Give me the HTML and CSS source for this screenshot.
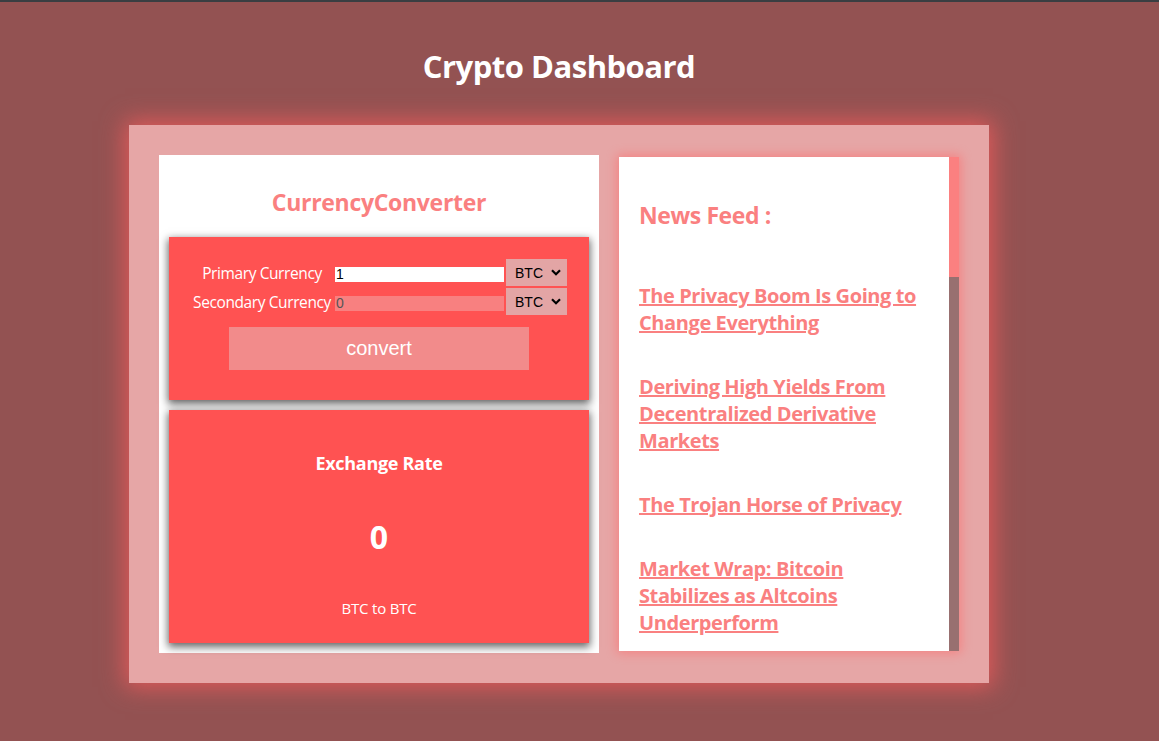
FILE: index.html
```html
<!DOCTYPE html>
<html lang="en">
<head>
<meta charset="utf-8">
<title>Crypto Dashboard</title>
<link rel="stylesheet" href="styles.css">
</head>
<body>
<div class="page">
  <h1 class="page-title">Crypto Dashboard</h1>
  <main class="dashboard">
    <section class="converter-card">
      <h2 class="converter-title">CurrencyConverter</h2>
      <div class="red-box form-box">
        <div class="form-grid">
          <label class="form-label" for="primary">Primary Currency</label>
          <input class="amount-input primary" id="primary" type="number" value="1">
          <select class="currency-select"><option>BTC</option><option>ETH</option><option>USD</option></select>
          <label class="form-label" for="secondary">Secondary Currency</label>
          <input class="amount-input secondary" id="secondary" type="number" value="0" disabled>
          <select class="currency-select"><option>BTC</option><option>ETH</option><option>USD</option></select>
        </div>
        <button class="convert-btn" type="button">convert</button>
      </div>
      <div class="red-box rate-box">
        <h3 class="rate-title">Exchange Rate</h3>
        <h1 class="rate-value">0</h1>
        <p class="rate-pair">BTC to BTC</p>
      </div>
    </section>
    <section class="news-card">
      <div class="news-content">
        <h2 class="news-title">News Feed :</h2>
        <ul class="news-list">
          <li><a href="#">The Privacy Boom Is Going to Change Everything</a></li>
          <li><a href="#">Deriving High Yields From Decentralized Derivative Markets</a></li>
          <li><a href="#">The Trojan Horse of Privacy</a></li>
          <li><a href="#">Market Wrap: Bitcoin Stabilizes as Altcoins Underperform</a></li>
        </ul>
      </div>
      <div class="scrollbar" aria-hidden="true"><div class="scrollbar-thumb"></div></div>
    </section>
  </main>
</div>
</body>
</html>
```

FILE: styles.css
```css
* { box-sizing: border-box; }

html, body {
  margin: 0;
  padding: 0;
}

body {
  background: #935252;
  border-top: 2px solid #3a3e42;
  min-height: 741px;
  font-family: "Open Sans", "Noto Sans", sans-serif;
  color: #fff;
  overflow: hidden;
}

.page {
  width: 1118px;
}

.page-title {
  margin: 0;
  padding-top: 44px;
  height: 123px;
  text-align: center;
  font-size: 31px;
  font-weight: 700;
  line-height: 40px;
  letter-spacing: -0.5px;
  color: #fff;
}

.dashboard {
  width: 860px;
  height: 558px;
  margin: 0 auto;
  padding: 30px;
  background: #e6a6a6;
  box-shadow: 0 0 22px 4px #e15a5a;
  display: flex;
  gap: 20px;
  align-items: flex-start;
}

.converter-card {
  width: 440px;
  height: 498px;
  background: #fff;
  padding: 0 10px 10px;
  display: flex;
  flex-direction: column;
}

.converter-title {
  margin: 0;
  height: 82px;
  padding-top: 32px;
  text-align: center;
  font-size: 23px;
  line-height: 30px;
  font-weight: 700;
  letter-spacing: -0.3px;
  color: #fa8080;
}

.red-box {
  background: #ff5252;
  box-shadow: 0 3px 8px 1px rgba(0, 0, 0, 0.6);
}

.form-box {
  height: 163px;
  padding-top: 22px;
  display: flex;
  flex-direction: column;
  align-items: center;
}

.form-grid {
  display: grid;
  grid-template-columns: 142px 169px 61px;
  column-gap: 2px;
  row-gap: 2px;
  align-items: center;
}

.form-label {
  text-align: center;
  font-size: 15.5px;
  line-height: 20px;
  color: #fff;
  white-space: nowrap;
  letter-spacing: -0.4px;
}

.amount-input {
  width: 169px;
  height: 15px;
  border: 0;
  padding: 0 1px;
  margin: 0;
  font-family: "Liberation Sans", Arial, sans-serif;
  font-size: 14px;
  line-height: 15px;
  outline: none;
  -moz-appearance: textfield;
}

.amount-input::-webkit-outer-spin-button,
.amount-input::-webkit-inner-spin-button {
  -webkit-appearance: none;
  margin: 0;
}

.amount-input.primary {
  background: #fff;
  color: #000;
  margin-top: 3px;
}

.amount-input.secondary {
  background: #f88080;
  color: #555;
  margin-top: 3px;
}

.currency-select {
  -webkit-appearance: none;
  appearance: none;
  width: 61px;
  height: 27px;
  border: 0;
  margin: 0;
  padding: 0 0 0 9px;
  background-color: #e3a5a5;
  background-image: url("data:image/svg+xml;utf8,<svg xmlns='http://www.w3.org/2000/svg' width='10' height='7' viewBox='0 0 10 7'><path d='M1 1.2 L5 5.2 L9 1.2' fill='none' stroke='black' stroke-width='2.2'/></svg>");
  background-repeat: no-repeat;
  background-position: right 6px center;
  font-family: "Liberation Sans", Arial, sans-serif;
  font-size: 14px;
  color: #000;
  outline: none;
}

.convert-btn {
  margin-top: 12px;
  width: 300px;
  height: 43px;
  border: 0;
  background: #f28b8b;
  color: #fff;
  font-family: "Liberation Sans", Arial, sans-serif;
  font-size: 20px;
  cursor: pointer;
}

.rate-box {
  margin-top: 10px;
  height: 233px;
  display: flex;
  flex-direction: column;
  align-items: center;
  padding-top: 40px;
}

.rate-title {
  margin: 0;
  font-size: 18px;
  line-height: 26px;
  font-weight: 700;
  letter-spacing: -0.3px;
}

.rate-value {
  margin: 41px 0 0;
  font-size: 32px;
  line-height: 40px;
  font-weight: 700;
}

.rate-pair {
  margin: 41px 0 0;
  font-size: 15px;
  line-height: 20px;
  letter-spacing: -0.2px;
}

.news-card {
  margin-top: 2px;
  width: 340px;
  height: 494px;
  background: #fff;
  box-shadow: 0 0 10px 2px #f48383;
  display: flex;
}

.news-content {
  flex: 1;
  padding: 0 14px 0 20px;
  overflow: hidden;
}

.scrollbar {
  width: 10px;
  flex: none;
  background: #987070;
}

.scrollbar-thumb {
  height: 120px;
  background: #fb8080;
}

.news-title {
  margin: 0;
  padding-top: 42px;
  font-size: 23px;
  line-height: 32px;
  font-weight: 700;
  letter-spacing: -0.4px;
  color: #fa8080;
}

.news-list {
  list-style: none;
  margin: 51px 0 0;
  padding: 0;
  display: flex;
  flex-direction: column;
  gap: 37px;
}

.news-list a {
  color: #fa8080;
  font-size: 20px;
  line-height: 27px;
  font-weight: 700;
  letter-spacing: -0.4px;
  text-decoration: underline;
}
```
